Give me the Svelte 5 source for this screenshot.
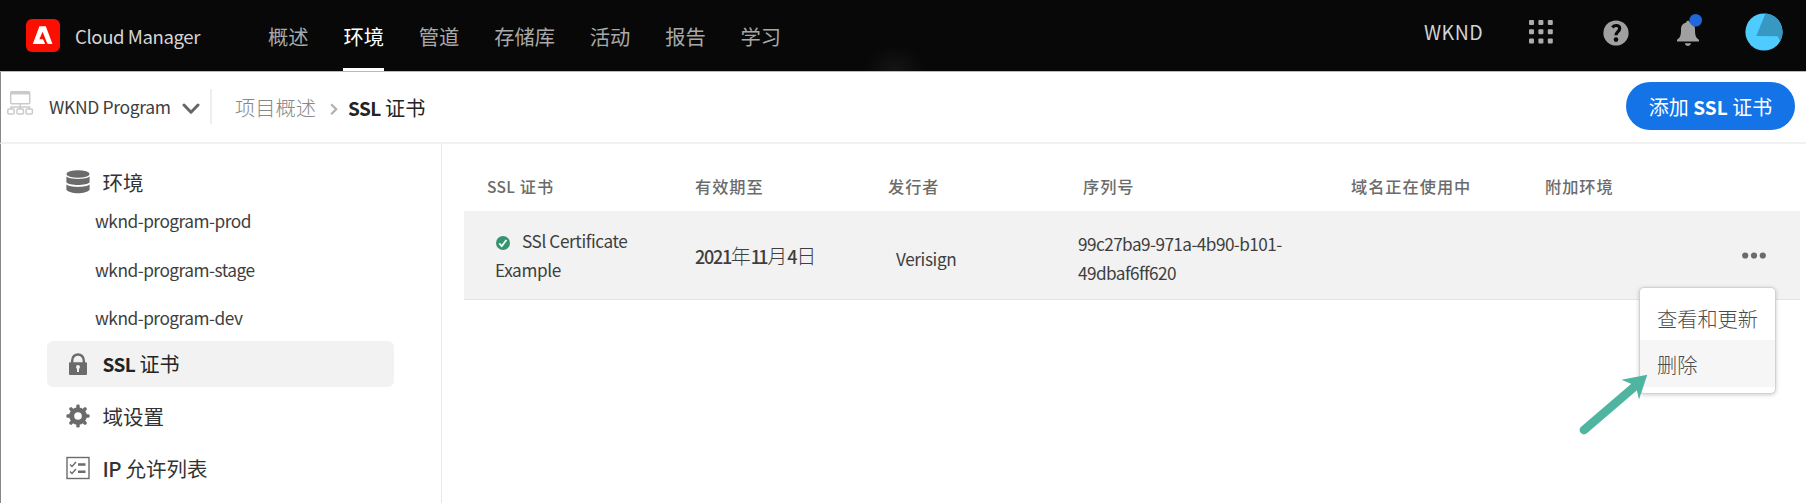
<script>
  const nav = ['概述', '环境', '管道', '存储库', '活动', '报告', '学习'];
  const activeNav = '环境';
  const environments = ['wknd-program-prod', 'wknd-program-stage', 'wknd-program-dev'];
  const columns = ['有效期至', '发行者', '序列号', '域名正在使用中', '附加环境'];
  const dots = [0, 1, 2];
  const teeth = [0, 45, 90, 135, 180, 225, 270, 315];
</script>

<div class="page">
  <header>
    <svg class="logo" width="34" height="34" viewBox="0 0 34 34">
      <rect width="34" height="33" rx="6" fill="#fa0f00" />
      <path d="M13.400 7.300h6.400L26.500 25h-4.200q-.8 0-1.100-.8L16.600 12.800l-3.200 7.500h3.300q.4 0 .6.400l1.700 3.700q.1.600-.5.600H6.800z" fill="#fff" />
    </svg>
    <span class="product">Cloud Manager</span>
    <nav>
      {#each nav as item}
        <a class:active={item === activeNav}>{item}</a>
      {/each}
    </nav>
    <div class="glow"></div>
    <div class="tools">
      <span class="org">WKND</span>
      <svg class="apps" width="24" height="24" viewBox="0 0 24 24" fill="#adadad">
        {#each dots as r}
          {#each dots as c}
            <rect x={c * 9.4} y={r * 9.3} width="5" height="5" rx="1" />
          {/each}
        {/each}
      </svg>
      <svg class="help" width="26" height="26" viewBox="0 0 26 26">
        <circle cx="13" cy="13" r="12.600" fill="#a0a0a0" />
        <path d="M9.300 7.300C10.600 5.900 12 5.500 13.200 5.500c2.300 0 3.500 1.300 3.500 3 0 2.900-3.700 3.400-3.700 6.800" fill="none" stroke="#080808" stroke-width="3.200" />
        <circle cx="13" cy="19.600" r="2.300" fill="#080808" />
      </svg>
      <svg class="bell" width="28" height="34" viewBox="0 0 28 34">
        <path d="M10.200 8.500c0-2.300 3.600-2.300 3.600 0 3.800.8 5.200 3.500 5.200 7 0 6 .7 8.200 4 10.200v1.800H1v-1.800c3.300-2 4-4.200 4-10.200 0-3.500 1.600-6.200 5.200-7z" fill="#a0a0a0" />
        <path d="M8.800 29.300h6.200c-.6 3.500-5.600 3.500-6.200 0z" fill="#a0a0a0" />
        <circle cx="19.700" cy="6.300" r="6.300" fill="#2066dc" />
      </svg>
      <svg class="avatar" width="38" height="38" viewBox="0 0 38 38">
        <circle cx="19" cy="19" r="18.600" fill="#4fccff" />
        <path d="M20.500.5A18.600 18.600 0 0 1 35.200 28l-2.600-4.700L11.200 23z" fill="#3799c3" />
      </svg>
    </div>
  </header>

  <div class="subbar">
    <svg class="tree" width="27" height="27" viewBox="0 0 27 27" fill="none" stroke="#cacaca" stroke-width="1.500">
      <rect x="3.700" y="1.700" width="19" height="12" rx="1" />
      <path d="M3.700 3h19" stroke-width="3" />
      <path d="M13.200 14v5M4 19v-2h18.500v2" />
      <rect x=".8" y="19" width="6.400" height="5" rx="1" /><rect x="10" y="19" width="6.400" height="5" rx="1" /><rect x="19" y="19" width="6.400" height="5" rx="1" />
    </svg>
    <span class="program">WKND Program</span>
    <svg class="down" width="18" height="12" viewBox="0 0 18 12" fill="none" stroke="#666" stroke-width="3" stroke-linecap="round" stroke-linejoin="round"><path d="M2 2l7 7.200L16 2" /></svg>
    <div class="divider"></div>
    <span class="crumb">项目概述</span>
    <svg class="right" width="8" height="13" viewBox="0 0 8 13" fill="none" stroke="#b0b0b0" stroke-width="2.200"><path d="M1.200 1.200l5 5-5 5" /></svg>
    <span class="current"><b>SSL</b> 证书</span>
    <button>添加 <b>SSL</b> 证书</button>
  </div>

  <div class="body">
    <aside>
      <div class="item env">
        <svg width="24" height="24" viewBox="0 0 24 24" fill="#6b6b6b">
          <ellipse cx="12" cy="4" rx="11.600" ry="3.800" />
          <path d="M.4 6.500c3 3.200 20.200 3.200 23.200 0v6c-3 3.300-20.200 3.300-23.200 0zM.4 14.500c3 3.200 20.200 3.200 23.200 0v5.300c-3 4.600-20.200 4.600-23.200 0z" />
        </svg>
        <span>环境</span>
      </div>
      <ul>
        {#each environments as name}
          <li>{name}</li>
        {/each}
      </ul>
      <div class="item selected">
        <svg width="24" height="24" viewBox="0 0 24 24">
          <path d="M6.200 11V8.500c0-8 11.600-8 11.600 0V11" fill="none" stroke="#6b6b6b" stroke-width="2.400" />
          <rect x="3" y="10.200" width="18" height="12.800" rx="1" fill="#6b6b6b" />
          <circle cx="12" cy="15" r="2" fill="#f2f2f2" /><path d="M11 15h2v5h-2z" fill="#f2f2f2" />
        </svg>
        <span><b>SSL</b> 证书</span>
      </div>
      <div class="item domains">
        <svg width="24" height="24" viewBox="0 0 24 24">
          {#each teeth as angle}
            <rect x="10.300" y=".4" width="3.400" height="6" rx="1.300" fill="#6b6b6b" transform="rotate({angle} 12 12)" />
          {/each}
          <circle cx="12" cy="12" r="6.300" fill="none" stroke="#6b6b6b" stroke-width="5" />
        </svg>
        <span>域设置</span>
      </div>
      <div class="item allow">
        <svg width="24" height="24" viewBox="0 0 24 24" fill="none" stroke="#6b6b6b">
          <rect x="1" y="1.500" width="22" height="21" stroke-width="1.400" />
          <path d="M4 8.500l2 2 4-4.500M4 15.500l2 2 4-4.500" stroke-width="1.400" />
          <path d="M12 8.500h7.500M12 15.800h7.500" stroke-width="2.400" />
        </svg>
        <span><i>IP</i> 允许列表</span>
      </div>
    </aside>

    <main>
      <div class="grid head">
        <span><i>SSL</i> 证书</span>
        {#each columns as column}
          <span>{column}</span>
        {/each}
      </div>
      <div class="grid row">
        <div class="cert">
          <svg width="14" height="14" viewBox="0 0 14 14"><circle cx="7" cy="7" r="7" fill="#36946f" /><path d="M3.300 7.400l2.500 2.700 4.600-6" fill="none" stroke="#fff" stroke-width="1.700" /></svg><span>SSl Certificate</span><br />Example
        </div>
        <div class="date"><b>2021</b>年<b class="tight">11</b>月<b>4</b>日</div>
        <div class="issuer">Verisign</div>
        <div class="serial">99c27ba9-971a-4b90-b101-<br />49dbaf6ff620</div>
        <div></div>
        <div></div>
        <div class="actions">
          <svg width="24" height="7" viewBox="0 0 24 7" fill="#6b6b6b">
            {#each dots as d}<circle cx={3.2 + d * 8.8} cy="3.500" r="3.100" />{/each}
          </svg>
          <div class="menu">
            <div>查看和更新</div>
            <div class="hover">删除</div>
          </div>
          <svg class="pointer" width="74" height="66" viewBox="0 0 74 66">
            <path d="M8 59L57 17" stroke="#4fb5a0" stroke-width="8.800" stroke-linecap="round" />
            <path d="M71.300 3.700L45.500 8.800l9.500 4 6 7.200L63 28.500z" fill="#4fb5a0" />
          </svg>
        </div>
      </div>
    </main>
  </div>
</div>

<style>
  :global(body) { background: #fff; overflow: hidden; }
  .page { width: 1806px; height: 503px; font-family: "Noto Sans CJK SC", "Noto Sans", sans-serif; color: #3e3e3e; box-sizing: border-box; display: flex; flex-direction: column; overflow: hidden; }
  svg { display: block; flex: none; }
  span, a, button, li { white-space: nowrap; }
  i { font-style: normal; }

  header { position: relative; height: 71px; flex: none; background: #080808; border-bottom: 1px solid #bbb; display: flex; padding-left: 26px; }
  .logo { margin-top: 19px; }
  .product { width: 193px; margin-left: 15px; line-height: 71px; font-size: 18.600px; letter-spacing: -0.420px; color: #d5d5d5; }
  nav { display: flex; gap: 34.800px; }
  nav a { height: 71px; box-sizing: border-box; line-height: 73px; font-size: 20.300px; color: #a8a8a8; }
  nav a.active { color: #fff; border-bottom: 3px solid #fff; }
  .glow { position: absolute; left: 865px; bottom: 0; width: 60px; height: 26px; background: radial-gradient(ellipse at 50% 100%, #151515, #080808 70%); }
  .tools { margin-left: auto; display: flex; padding-right: 23px; }
  .org { width: 105px; line-height: 64px; font-size: 19.500px; letter-spacing: 0.500px; color: #d2d2d2; }
  .apps { margin: 20px 50px 0 0; }
  .help { margin: 20px 46px 0 0; }
  .bell { margin: 14px 41px 0 1px; }
  .avatar { margin-top: 13px; }

  .subbar { height: 70px; flex: none; border-bottom: 2px solid #f1f1f1; border-left: 1px solid #888; display: flex; padding-left: 6px; }
  .tree { margin-top: 18px; }
  .program { margin-left: 15px; width: 133px; line-height: 69px; font-size: 17.500px; letter-spacing: -0.360px; }
  .down { margin-top: 31px; }
  .divider { width: 2px; height: 35px; margin: 17px 23px 0 10px; background: #eee; }
  .crumb { width: 95px; font-size: 20.300px; font-weight: 300; line-height: 71px; color: #888; }
  .right { margin-top: 31px; }
  .current { margin-left: 10px; font-size: 20.200px; line-height: 71px; color: #242424; }
  .current b, .selected b { font-size: 19px; letter-spacing: -0.600px; }
  button { margin: 10px 11px 0 auto; width: 169px; height: 48px; border: 0; border-radius: 24px; background: #1473e6; color: #fff; font: 20px "Noto Sans CJK SC", sans-serif; line-height: 47px; padding: 0; }
  button b { font-size: 19px; }

  .body { flex: 1; display: flex; border-left: 1px solid #888; }
  aside { width: 440px; border-right: 1px solid #e9e9e9; }
  .item { margin-left: 46px; padding-left: 18.500px; width: 328.500px; height: 46px; border-radius: 6px; display: flex; align-items: center; gap: 13px; font-size: 20.500px; font-weight: 400; color: #333; }
  .item span { line-height: 44px; }
  .item i { font-weight: 500; letter-spacing: -0.600px; }
  .env { margin-top: 15px; }
  ul { list-style: none; margin: 0; padding: 0 0 0 94px; height: 136px; font-size: 17.300px; letter-spacing: -0.500px; }
  li { height: 48.600px; line-height: 32px; }
  .selected { font-size: 20px; background: #f2f2f2; color: #242424; }
  .domains { margin-top: 6px; }
  .allow { margin-top: 6px; }

  main { margin-left: 22px; width: 1336px; }
  .grid { display: grid; grid-template-columns: 231px 193px 195px 268px 194px 187px 1fr; }
  .head { height: 67px; line-height: 84px; font-size: 16.200px; letter-spacing: 1px; color: #6b6b6b; font-weight: 500; }
  .head span:first-child { padding-left: 23px; }
  .head i { font-size: 15.500px; letter-spacing: 0.300px; }
  .row { height: 89px; box-sizing: border-box; background: #f2f2f2; border-bottom: 1px solid #e3e3e3; font-size: 17.200px; letter-spacing: -0.400px; }
  .cert { padding: 16px 0 0 31px; line-height: 28.500px; }
  .cert svg { display: inline-block; margin: 0 12px 0 1px; vertical-align: -2px; }
  .date { line-height: 90px; font-size: 20px; font-weight: 300; letter-spacing: 0; }
  .date b { font-size: 18px; font-weight: 500; letter-spacing: -1.300px; }
  .date b.tight { letter-spacing: -2.800px; margin-right: 1.500px; }
  .issuer { padding-left: 8px; line-height: 96px; }
  .serial { margin-left: -5px; padding-top: 19px; line-height: 28.500px; letter-spacing: -0.560px; }
  .actions { position: relative; padding: 41px 0 0 10px; }
  .menu { position: absolute; left: -93px; top: 76px; width: 137px; height: 107px; box-sizing: border-box; border: 1px solid #d2d2d2; border-radius: 5px; background: #fff; box-shadow: 0 1px 4px #0003; padding-top: 5px; font-size: 20.200px; font-weight: 300; letter-spacing: 0; color: #4b4b4b; }
  .menu div { height: 47px; line-height: 51px; padding-left: 17px; white-space: nowrap; }
  .menu .hover { background: #f6f6f6; line-height: 49px; }
  .pointer { position: absolute; left: -156px; top: 160px; }
</style>
